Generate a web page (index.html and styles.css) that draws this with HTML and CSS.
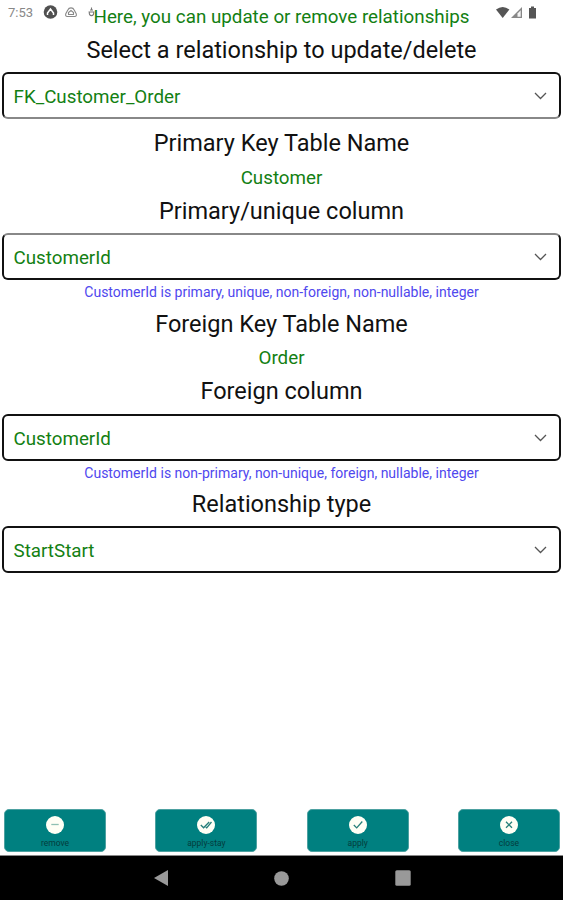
FILE: index.html
```html
<!DOCTYPE html>
<html lang="en">
<head>
<meta charset="utf-8">
<title>Relationships</title>
<link rel="stylesheet" href="styles.css">
</head>
<body>
<div class="status">
  <span class="time">7:53</span>
  <svg class="left-icons" width="60" height="16" viewBox="0 0 60 16">
    <circle cx="7.5" cy="8" r="6.8" fill="#505050"/>
    <path d="M4.500 11V9L7.500 5l3 4v2" fill="none" stroke="#fff" stroke-width="1.5"/>
    <path d="M24.800 6a3.500 3.500 0 0 1 6.400 0l2 3.700q.8 2.800-1.500 2.800h-7.400q-2.300 0-1.500-2.800ZM25.500 10.500V8.500L28 6.500l2.500 2V10.500M25 10.500h6" fill="none" stroke="#888" stroke-width="1.1"/>
    <path d="M48.500 3.500v3M45.500 8h6M46.500 8.500a2.200 2.200 0 1 0 4 0M47 6h3" fill="none" stroke="#777" stroke-width="1.1"/>
  </svg>
  <svg class="right-icons" width="44" height="14" viewBox="0 0 44 14">
    <path d="M0 3.5Q6.700-1.500 13.400 3.500L6.700 12Z" fill="#555"/>
    <path d="M15 12 26 1V12Z" fill="#888"/><path d="M21.500 7.500 24.700 4.300V10.700H21.500Z" fill="#f4f4f4"/>
    <path d="M33 2h2V.5h3V2h2v10.500h-7Z" fill="#555"/>
  </svg>
</div>
<main>
  <p class="value intro">Here, you can update or remove relationships</p>
  <h2>Select a relationship to update/delete</h2>
  <div class="field first"><span>FK_Customer_Order</span><svg width="13" height="8" viewBox="0 0 13 8"><path d="M1 1l5.500 5.500L12 1"/></svg></div>
  <h2>Primary Key Table Name</h2>
  <p class="value">Customer</p>
  <h2>Primary/unique column</h2>
  <div class="field upper"><span>CustomerId</span><svg width="13" height="8" viewBox="0 0 13 8"><path d="M1 1l5.500 5.500L12 1"/></svg></div>
  <p class="hint">CustomerId is primary, unique, non-foreign, non-nullable, integer</p>
  <h2>Foreign Key Table Name</h2>
  <p class="value short">Order</p>
  <h2>Foreign column</h2>
  <div class="field lower"><span>CustomerId</span><svg width="13" height="8" viewBox="0 0 13 8"><path d="M1 1l5.500 5.500L12 1"/></svg></div>
  <p class="hint second">CustomerId is non-primary, non-unique, foreign, nullable, integer</p>
  <h2>Relationship type</h2>
  <div class="field"><span>StartStart</span><svg width="13" height="8" viewBox="0 0 13 8"><path d="M1 1l5.500 5.500L12 1"/></svg></div>
</main>
<div class="actions">
  <div class="btn"><svg width="18" height="18" viewBox="0 0 18 18"><circle cx="9" cy="9" r="9"/><path d="M5.300 8.500h7.400" class="pale"/></svg><span>remove</span></div>
  <div class="btn"><svg width="18" height="18" viewBox="0 0 18 18"><circle cx="9" cy="9" r="9"/><path d="M3.800 9l2.800 2.800L12.200 6M8.700 11l1 .8L14.500 6"/></svg><span>apply-stay</span></div>
  <div class="btn"><svg width="18" height="18" viewBox="0 0 18 18"><circle cx="9" cy="9" r="9"/><path d="M4.800 9l2.900 2.900L13.300 5.500"/></svg><span>apply</span></div>
  <div class="btn"><svg width="18" height="18" viewBox="0 0 18 18"><circle cx="9" cy="9" r="9"/><path d="M6 5.800l6 6M12 5.800l-6 6"/></svg><span>close</span></div>
</div>
<nav>
  <svg width="14" height="16" viewBox="0 0 14 16"><path d="M0 8 14 0V16Z"/></svg>
  <svg width="15" height="15" viewBox="0 0 15 15"><circle cx="7.500" cy="7.500" r="7.300"/></svg>
  <svg width="16" height="16" viewBox="0 0 16 16"><rect x=".3" y=".3" width="15.400" height="15.400" rx="1.500"/></svg>
</nav>
</body>
</html>
```

FILE: styles.css
```css
* { box-sizing: border-box; }
body {
  margin: 0;
  width: 563px;
  height: 900px;
  overflow: hidden;
  display: flex;
  flex-direction: column;
  background: #fff;
  font-family: Roboto, sans-serif;
}
.status {
  position: absolute;
  top: 0;
  left: 0;
  width: 563px;
  height: 25px;
  display: flex;
  padding: 4px 23px 0 8px;
}
.time { width: 35px; font-size: 13px; line-height: 18px; color: #888; }
.right-icons { margin: 2px 0 0 auto; }
main { flex: 1; }
h2, p { margin: 0; text-align: center; white-space: nowrap; }
h2 {
  height: 34px;
  font-size: 23.500px;
  line-height: 34px;
  font-weight: 400;
  color: #111;
}
.value {
  height: 34px;
  font-size: 18.800px;
  line-height: 36px;
  color: #138013;
}
.value.intro { height: 33px; line-height: 34px; }
.value.short { height: 33px; line-height: 34px; }
.field {
  height: 47px;
  margin: 5px 2px 0;
  border: 2px solid #111;
  border-radius: 6px;
  display: flex;
  align-items: center;
  justify-content: space-between;
  padding: 2px 12px 0 9.500px;
  font-size: 18.800px;
  color: #138013;
}
.field.first { margin-bottom: 7px; border-bottom-color: #888; }
.field.upper { border-top-color: #888; }
.field svg { margin-top: -2px; }
.field path { fill: none; stroke: #555; stroke-width: 1.3; }
.hint {
  height: 27px;
  font-size: 14.030px;
  line-height: 25px;
  color: #5048ee;
}
.field.lower { margin-top: 6px; }
.hint.second { height: 26px; }
.actions {
  height: 46px;
  padding: 0 3px 0 4px;
  display: flex;
  justify-content: space-between;
}
.btn {
  width: 102px;
  height: 43px;
  border: 1px solid #4da1a1;
  border-radius: 5px;
  background: #008080;
  display: flex;
  flex-direction: column;
  align-items: center;
  padding-top: 6px;
  font-size: 8.500px;
  line-height: 18px;
  color: #043c3c;
}
.btn svg { flex: none; }
.btn circle { fill: #fffff5; }
.btn path { fill: none; stroke: #267f79; stroke-width: 1.3; }
.btn .pale { stroke: #8fc0b2; }
nav {
  height: 45px;
  border-top: 1px solid #888;
  background: #000;
  display: flex;
  align-items: center;
  justify-content: center;
  gap: 106px;
  padding-left: 1px;
}
nav svg { fill: #999; }
```
